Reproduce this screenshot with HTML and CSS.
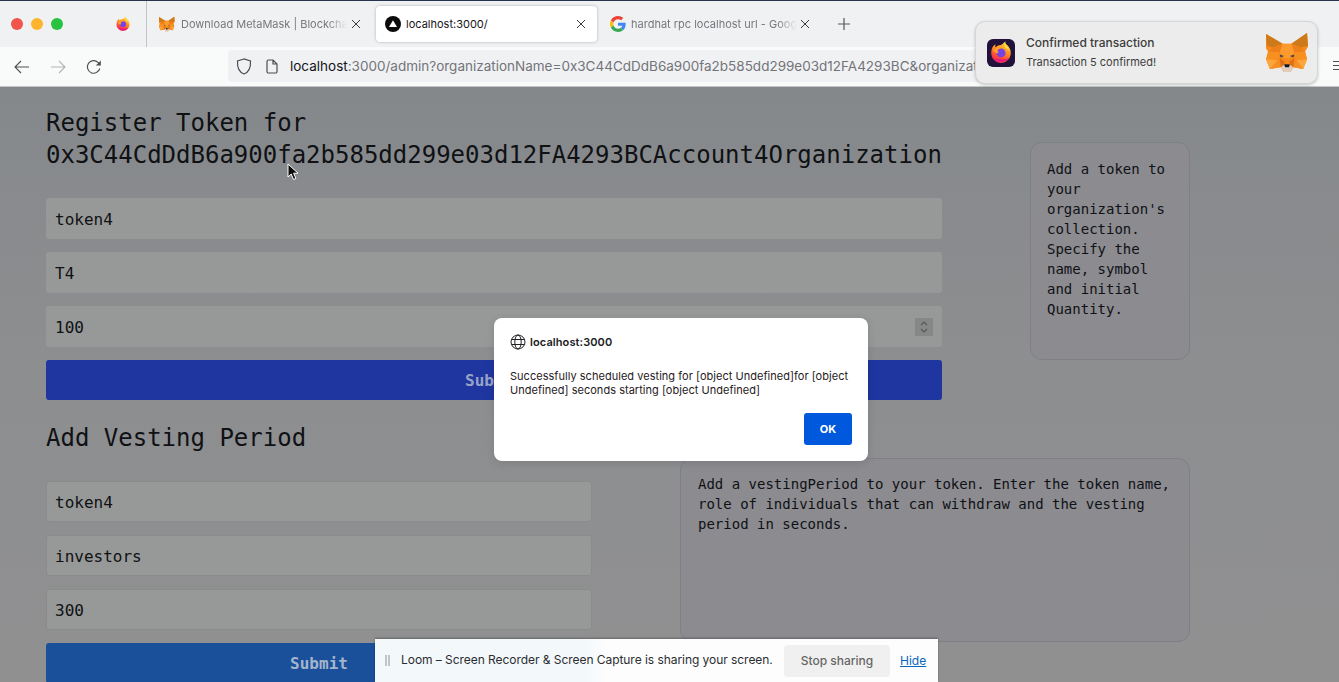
FILE: index.html
```html
<!DOCTYPE html>
<html lang="en">
<head>
<meta charset="utf-8">
<title>localhost:3000</title>
<link rel="stylesheet" href="styles.css">
</head>
<body>
<svg class="defs" width="0" height="0" aria-hidden="true">
  <defs>
    <linearGradient id="ffBody" x1="0.700" y1="0" x2="0.300" y2="1">
      <stop offset="0" stop-color="#ffd83a"/>
      <stop offset="0.450" stop-color="#ff8a1f"/>
      <stop offset="0.800" stop-color="#ff3a3f"/>
      <stop offset="1" stop-color="#e8207f"/>
    </linearGradient>
    <symbol id="fox" viewBox="0 0 44 42">
      <path fill="#f88a1c" d="M0 2 17 12h9L42 1l1 14-3 5 2 8-4 10-10-2-3 5h-7l-3-5-11 2-4-10 2-8-3-5z"/>
      <path fill="#cc7a1a" d="M0 2 17 12 7 16 1 14z"/>
      <path fill="#cc7a1a" d="M42 1 26 12 36 16 43 14z"/>
      <path fill="#ee7f1a" d="M7 16 17 12 14 21 3 20z"/>
      <path fill="#ee7f1a" d="M36 16 26 12 29 21 40 20z"/>
      <path fill="#fc9a2e" d="M17 12h9l3 9-5 6h-5l-5-6z"/>
      <path fill="#f8901f" d="M3 20 14 21 12 29 0 28z"/>
      <path fill="#f8901f" d="M40 20 29 21 31 29 42 28z"/>
      <path fill="#fca53c" d="M4 38 0 28 12 29z"/>
      <path fill="#fca53c" d="M38 38 42 28 31 29z"/>
      <path fill="#f59024" d="M12 29 15 36 4 38z"/>
      <path fill="#f59024" d="M31 29 28 36 38 38z"/>
      <path fill="#e0cdbf" d="M15 36 19 33h5l4 3-3 5h-7z"/>
      <path fill="#3a4452" d="M14 23 18.500 24.500 15 26z"/>
      <path fill="#3a4452" d="M29 23 24.500 24.500 28 26z"/>
      <path fill="#161616" d="M18.500 33h6l-1 3h-4z"/>
      <path fill="#dd7018" d="M14 27 19 30 19 33 15 36z"/>
      <path fill="#dd7018" d="M29 27 24 30 24 33 28 36z"/>
    </symbol>
    <symbol id="firefox" viewBox="0 0 32 32">
      <path fill="url(#ffBody)" d="M3 17C3 10 6 6 9 5c-1 2-1 3 0 4 2-2 4-3 7-3 3-2 5-4 6-5-.5 2 0 3 1 4 4 3 6 7 6 12 0 7-6 13-13 13S3 24 3 17z"/>
      <path fill="#ffe04a" d="M21 2c0 3 6 7 8 15-1-3-4-6-7-7-1-3-2-5-1-8z"/>
      <circle cx="16" cy="16.500" r="6" fill="#7542e5"/>
      <path fill="#ff9f2a" d="M5 13c3-3 8-4 12-3-3 0-5 2-6 4 2 1 2 2 1 3-3 0-5-2-7-4z"/>
      <path fill="#e31587" d="M7 24c3 3 6 4 10 4 4 0 7-1 10-5-3 2-7 3-11 2-3 0-6 0-9-1z"/>
    </symbol>
  </defs>
</svg>

<div class="topbar">
  <div class="tabstrip">
    <div class="lights"><i class="light red"></i><i class="light amber"></i><i class="light green"></i></div>
    <svg class="ff-pinned"><use href="#firefox"/></svg>
    <div class="tab-sep"></div>
    <div class="tab tab-mm">
      <svg class="tab-fav"><use href="#fox"/></svg>
      <span class="tab-title">Download MetaMask | Blockchain Wallet</span>
      <span class="tab-x"><svg viewBox="0 0 10 10"><path d="M1 1l8 8M9 1l-8 8"/></svg></span>
    </div>
    <div class="tab tab-active">
      <svg class="tab-fav" viewBox="0 0 16 16"><circle cx="8" cy="8" r="8" fill="#0b0b0b"/><path d="M8 4.300 12 11H4z" fill="#fff"/></svg>
      <span class="tab-title">localhost:3000/</span>
      <span class="tab-x"><svg viewBox="0 0 10 10"><path d="M1 1l8 8M9 1l-8 8"/></svg></span>
    </div>
    <div class="tab tab-g">
      <svg class="tab-fav" viewBox="0 0 48 48">
        <path fill="#ea4335" d="M24 9.500c3.500 0 6.700 1.300 9.200 3.500l6.800-6.800C35.900 2.400 30.300 0 24 0 14.600 0 6.500 5.400 2.600 13.200l7.900 6.200C12.400 13.600 17.700 9.500 24 9.500z"/>
        <path fill="#4285f4" d="M47 24.500c0-1.600-.1-3.100-.4-4.500H24v9h12.900c-.6 3-2.200 5.500-4.700 7.200l7.700 6C44.400 38 47 31.800 47 24.500z"/>
        <path fill="#fbbc05" d="M10.500 28.600c-.5-1.400-.8-3-.8-4.600s.3-3.200.8-4.600l-7.900-6.200C.9 16.500 0 20.100 0 24s.9 7.500 2.600 10.800z"/>
        <path fill="#34a853" d="M24 48c6.500 0 11.900-2.100 15.900-5.800l-7.700-6c-2.200 1.400-4.900 2.300-8.200 2.300-6.300 0-11.600-4.100-13.500-9.900l-7.900 6.200C6.500 42.600 14.600 48 24 48z"/>
      </svg>
      <span class="tab-title">hardhat rpc localhost url - Google Search</span>
      <span class="tab-x"><svg viewBox="0 0 10 10"><path d="M1 1l8 8M9 1l-8 8"/></svg></span>
    </div>
    <svg class="new-tab" viewBox="0 0 12 12"><path d="M6 0v12M0 6h12"/></svg>
  </div>
  <div class="toolbar">
    <svg class="nav nav-back" viewBox="0 0 16 14"><path d="M15 7H1.500M7 1 1 7l6 6"/></svg>
    <svg class="nav nav-fwd" viewBox="0 0 16 14"><path d="M1 7h13.500M9 1l6 6-6 6"/></svg>
    <svg class="nav nav-reload" viewBox="0 0 16 16"><path d="M13.800 9.500A6.300 6.300 0 1 1 12 3.300L14 5.200"/><path class="solid" d="M14.800 1.500v5h-5z"/></svg>
    <div class="urlbar">
      <svg class="shield" viewBox="0 0 16 17"><path d="M8 1 1.500 3c-.3 6 1 11 6.500 13 5.500-2 6.800-7 6.500-13z"/></svg>
      <svg class="page-ico" viewBox="0 0 12 15"><path d="M1 2.500A1.500 1.500 0 0 1 2.500 1H7l4 4v7.500a1.500 1.500 0 0 1-1.500 1.500h-7A1.500 1.500 0 0 1 1 12.500zM7 1v4h4"/></svg>
      <span class="url"><span class="url-host">localhost</span>:3000/admin?organizationName=0x3C44CdDdB6a900fa2b585dd299e03d12FA4293BC&amp;organizationAccount=Account4</span>
    </div>
    <div class="hamburger"><i></i><i></i><i></i></div>
  </div>
</div>

<main class="page">
  <section class="row row-token">
    <div class="col">
      <h1 class="heading">Register Token for 0x3C44CdDdB6a900fa2b585dd299e03d12FA4293BCAccount4Organization</h1>
      <form class="fields">
        <input class="field" type="text" value="token4">
        <input class="field" type="text" value="T4">
        <div class="field field-num">
          <span>100</span>
          <span class="spin"><svg viewBox="0 0 10 14"><path d="M2 5l3-3 3 3M2 9l3 3 3-3"/></svg></span>
        </div>
        <button class="submit submit-a" type="button">Submit</button>
      </form>
    </div>
    <aside class="info info-token">Add a token to your organization's collection. Specify the name, symbol and initial Quantity.</aside>
  </section>
  <section class="row row-vesting">
    <div class="col">
      <h2 class="heading">Add Vesting Period</h2>
      <form class="fields">
        <input class="field field-line" type="text" value="token4">
        <input class="field field-line" type="text" value="investors">
        <input class="field field-line" type="text" value="300">
        <button class="submit submit-b" type="button">Submit</button>
      </form>
    </div>
    <aside class="info info-vesting">Add a vestingPeriod to your token. Enter the token name, role of individuals that can withdraw and the vesting period in seconds.</aside>
  </section>
</main>

<div class="notice">
  <svg class="notice-app" viewBox="0 0 28 28"><rect width="28" height="28" rx="6" fill="#20123a"/><svg x="2" y="1.500" width="24" height="24" viewBox="0 0 32 32"><use href="#firefox"/></svg></svg>
  <div class="notice-text">
    <div class="notice-title">Confirmed transaction</div>
    <div class="notice-body">Transaction 5 confirmed!</div>
  </div>
  <svg class="notice-fox"><use href="#fox"/></svg>
</div>

<svg class="cursor" viewBox="0 0 12 18"><path d="M1 1v13l3.200-3 2.300 5.500 2.400-1-2.300-5.300H11z" fill="#0a0a0a" stroke="#fff" stroke-width="1"/></svg>

<div class="dialog" role="alertdialog">
  <div class="dialog-head">
    <svg class="globe" viewBox="0 0 16 16"><circle cx="8" cy="8" r="7"/><ellipse cx="8" cy="8" rx="3.200" ry="7"/><path d="M1.500 5.500h13M1.500 10.500h13"/></svg>
    <span>localhost:3000</span>
  </div>
  <p class="dialog-msg">Successfully scheduled vesting for [object Undefined]for [object Undefined] seconds starting [object Undefined]</p>
  <div class="dialog-actions"><button class="ok" type="button">OK</button></div>
</div>

<div class="loom">
  <span class="grip"></span>
  <span class="loom-text">Loom – Screen Recorder &amp; Screen Capture is sharing your screen.</span>
  <button class="stop" type="button">Stop sharing</button>
  <a class="hide" href="#">Hide</a>
</div>
</body>
</html>
```
FILE: styles.css
```css
* { box-sizing: border-box; }
html, body { margin: 0; height: 100%; }
body {
  width: 1339px;
  height: 682px;
  overflow: hidden;
  position: relative;
  display: flex;
  flex-direction: column;
  font-family: Inter, "Liberation Sans", sans-serif;
  background: #8b8d8f;
}
.defs { position: absolute; }

/* browser chrome */
.topbar { flex: none; height: 87px; border-top: 1px solid #26344e; border-bottom: 1px solid #c4c5c6; background: #f9fafa; }
.tabstrip { height: 46px; background: #f0f1f3; display: flex; align-items: center; }
.lights { display: flex; gap: 8px; margin-left: 11px; width: 104px; }
.light { width: 12px; height: 12px; border-radius: 50%; }
.red { background: #f0544c; }
.amber { background: #fdb52e; }
.green { background: #27c23f; }
.ff-pinned { width: 16px; height: 16px; }
.tab-sep { width: 1px; height: 46px; background: #c3c3c5; margin-left: 15px; }
.tab { display: flex; align-items: center; height: 36px; position: relative; }
.tab-fav { width: 16px; height: 16px; flex: none; }
.tab-title { font-size: 11px; white-space: nowrap; overflow: hidden; color: #77787c; }
.tab-x { width: 10px; height: 10px; flex: none; display: flex; }
.tab-x svg { width: 10px; height: 10px; fill: none; stroke: #3a3a3e; stroke-width: 1; }
.tab-mm { width: 229px; padding-left: 12px; }
.tab-mm .tab-title, .tab-g .tab-title {
  margin-left: 6px; width: 166px;
  -webkit-mask-image: linear-gradient(to right, #000 88%, transparent);
  mask-image: linear-gradient(to right, #000 88%, transparent);
}
.tab-mm .tab-x { margin-left: 4px; }
.tab-g .tab-x { margin-left: 3px; }
.tab-g .tab-title { margin-left: 5px; }
.tab-active { width: 221px; padding-left: 9px; background: #fff; border-radius: 4px; box-shadow: 0 0 3px rgba(0,0,0,.28); }
.tab-active .tab-title { margin-left: 5px; width: 170px; color: #15141a; }
.tab-active .tab-x { margin-left: 0; }
.tab-g { width: 228px; padding-left: 13px; }
.new-tab { width: 12px; height: 12px; margin-left: 13px; fill: none; stroke: #55565a; stroke-width: 1.200; }

.toolbar { height: 39px; display: flex; align-items: center; position: relative; }
.nav { fill: none; stroke-width: 1.100; flex: none; }
.nav-back { width: 16px; height: 14px; margin-left: 14px; stroke: #4d4e52; }
.nav-fwd { width: 16px; height: 14px; margin-left: 20px; stroke: #b3b4b7; }
.nav-reload { width: 16px; height: 16px; margin-left: 20px; stroke: #4d4e52; }
.nav-reload .solid { fill: #4d4e52; stroke: none; }
.urlbar { margin-left: 126px; width: 1080px; height: 32px; margin-top: -1px; background: #f0f1f3; border-radius: 4px; display: flex; align-items: center; padding-left: 8px; overflow: hidden; flex: none; }
.shield { width: 16px; height: 17px; fill: none; stroke: #4d4e52; stroke-width: 1.200; flex: none; }
.page-ico { width: 12px; height: 15px; fill: none; stroke: #4d4e52; stroke-width: 1.200; margin-left: 14px; flex: none; }
.url { margin-left: 12px; font-size: 13.500px; white-space: nowrap; color: #73747a; }
.url-host { color: #15141a; }
.hamburger { position: absolute; right: -8px; top: 14px; width: 14px; display: flex; flex-direction: column; gap: 3px; }
.hamburger i { display: block; height: 1px; background: #4d4e52; }

/* page */
.page {
  flex: 1;
  min-height: 0;
  overflow: hidden;
  padding: 19px 0 0 46px;
  font-family: "DejaVu Sans Mono", monospace;
  color: #0f1114;
  background: linear-gradient(180deg, #85888b 0%, #8d8e90 45%, #909091 100%);
}
.row { display: grid; column-gap: 88px; }
.row-token { grid-template-columns: 896px 160px; }
.row-vesting { grid-template-columns: 546px 510px; margin-top: 21px; }
.heading { margin: 0 0 27px; padding-top: 1px; font-size: 24px; line-height: 32px; font-weight: 400; overflow-wrap: anywhere; }
.fields { margin: 0; display: flex; flex-direction: column; gap: 13px; }
.field {
  display: flex;
  align-items: center;
  justify-content: space-between;
  width: 100%;
  height: 41px;
  padding: 2px 9px 0;
  border: 0;
  border-radius: 3px;
  background: #979998;
  font: 16px "DejaVu Sans Mono", monospace;
  color: #0f1114;
  outline: none;
}
.field-line { border: 1px solid #8a8c8c; padding: 1px 8px 0; }
.spin { width: 18px; height: 18px; background: #868888; display: flex; align-items: center; justify-content: center; margin-top: -2px; }
.spin svg { width: 10px; height: 14px; fill: none; stroke: #55575a; stroke-width: 1.200; }
.submit { height: 40px; border: 0; border-radius: 3px; font: 700 16px "DejaVu Sans Mono", monospace; flex: none; }
.submit-a { background: #1f35a0; color: #98a3c6; }
.submit-b { background: #1a4f9a; color: #a3b5cd; }
.info { border: 1px solid #7f8084; border-radius: 12px; background: #8b8b90; font-size: 14px; line-height: 20px; color: #0f1114; }
.info-token { height: 218px; margin-top: 36px; padding: 16px; }
.info-vesting { height: 184px; margin-top: 37px; padding: 15px 16px 15px 17px; }

/* notification */
.notice { position: absolute; left: 975px; top: 21px; width: 343px; height: 63px; display: flex; align-items: center; background: #ececec; border: 1px solid #d6d6d6; border-radius: 10px; box-shadow: 0 1px 3px rgba(0,0,0,.22); }
.notice-app { width: 28px; height: 28px; margin-left: 11px; flex: none; }
.notice-text { margin-left: 11px; flex: 1; color: #3c3c3c; margin-top: -2px; }
.notice-title { font-size: 12px; font-weight: 500; line-height: 16px; }
.notice-body { font-size: 11px; line-height: 14px; margin-top: 4px; }
.notice-fox { width: 43px; height: 41px; margin-right: 8px; flex: none; }

.cursor { position: absolute; left: 287px; top: 163px; width: 12px; height: 18px; }

/* alert */
.dialog { position: absolute; left: 494px; top: 318px; width: 374px; height: 143px; padding: 16px; background: #fff; border-radius: 8px; box-shadow: 0 2px 8px rgba(0,0,0,.12); color: #1f2023; font-size: 11px; letter-spacing: .03px; }
.dialog-head { display: flex; align-items: center; gap: 4px; height: 16px; font-weight: 600; color: #202124; letter-spacing: .1px; }
.globe { width: 16px; height: 16px; fill: none; stroke: #202124; stroke-width: 1; }
.dialog-msg { margin: 19px 0 0; line-height: 14px; }
.dialog-actions { display: flex; justify-content: flex-end; margin-top: 16px; }
.ok { width: 48px; height: 32px; background: #0058dd; color: #fff; border: 0; border-radius: 3px; font: 700 11px Inter, sans-serif; }

/* loom */
.loom { position: absolute; left: 375px; top: 639px; width: 563px; height: 43px; display: flex; align-items: center; padding-left: 10px; font-size: 12px; color: #2b2d31; background: linear-gradient(90deg, #f3f8fb 0 37%, #fdfdfd 41%); box-shadow: 0 -1px 2px rgba(0,0,0,.3); }
.grip { width: 5px; height: 11px; border-left: 2px solid #c2c5c8; border-right: 2px solid #c2c5c8; flex: none; }
.loom-text { margin: 0 0 2px 11px; white-space: nowrap; width: 383px; letter-spacing: -.05px; }
.stop { width: 106px; height: 32px; border: 0; border-radius: 4px; background: #f0f0f0; color: #666; font: 500 12px Inter, sans-serif; flex: none; }
.hide { margin-left: 10px; color: #0a66b8; text-decoration: underline; }
```
